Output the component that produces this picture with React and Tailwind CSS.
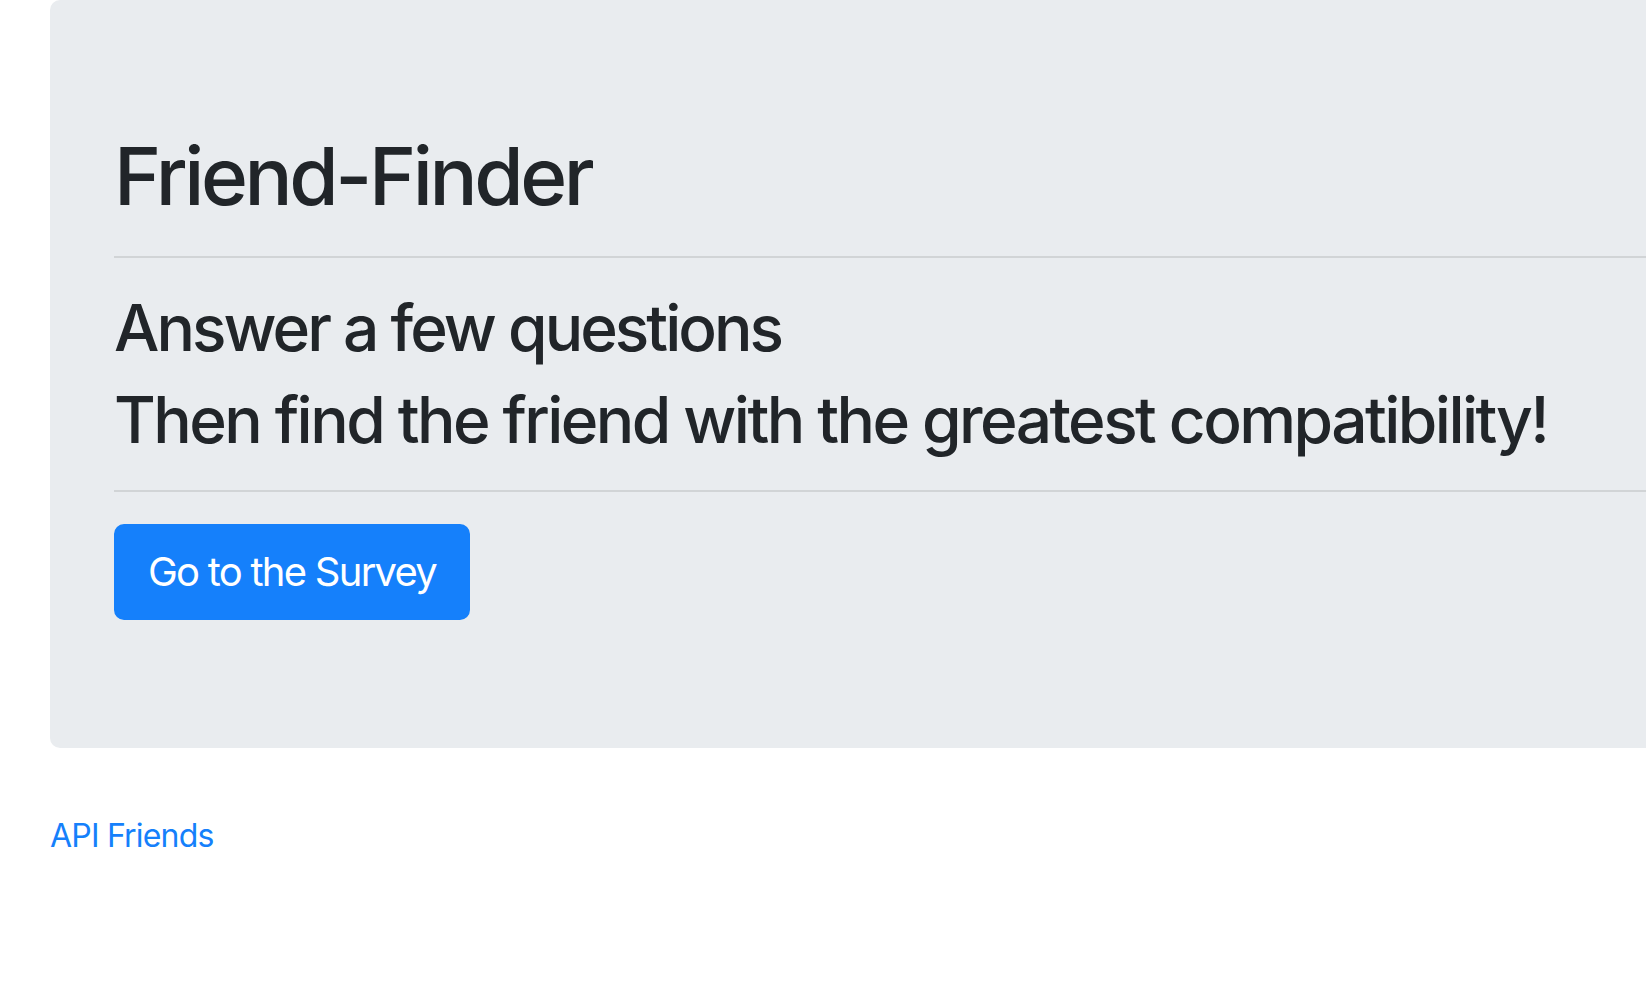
export default function App() {
  return (
    <div className="min-h-screen bg-white overflow-hidden font-['Inter','Noto_Sans',sans-serif] text-[#212529]">
      <div className="pl-[50px]">
        <div className="w-[1700px] bg-[#e9ecef] rounded-[10px] pt-[128px] pb-[128px] pl-[64px] pr-[64px]">
          <h1 className="text-[80px] leading-[96px] font-medium tracking-[-3.4px]">Friend-Finder</h1>
          <hr className="mt-[32px] border-0 border-t-2 border-t-[rgba(0,0,0,0.1)]" />
          <h2 className="mt-[32px] text-[64px] leading-[76px] font-medium tracking-[-2.95px]">Answer a few questions</h2>
          <h2 className="mt-[16px] text-[64px] leading-[76px] font-medium tracking-[-2.55px]">Then find the friend with the greatest compatibility!</h2>
          <hr className="mt-[32px] border-0 border-t-2 border-t-[rgba(0,0,0,0.1)]" />
          <div className="mt-[32px] flex">
            <a href="#" className="inline-block bg-[#1580fb] border-2 border-[#1580fb] text-white rounded-[10px] px-[32px] py-[16px] text-[40px] leading-[60px] font-normal tracking-[-1.75px]">
              Go to the Survey
            </a>
          </div>
        </div>
        <a href="#" className="block mt-[64px] text-[32px] leading-[48px] text-[#1580fb] w-fit tracking-[-0.8px]">API Friends</a>
      </div>
    </div>
  );
}
